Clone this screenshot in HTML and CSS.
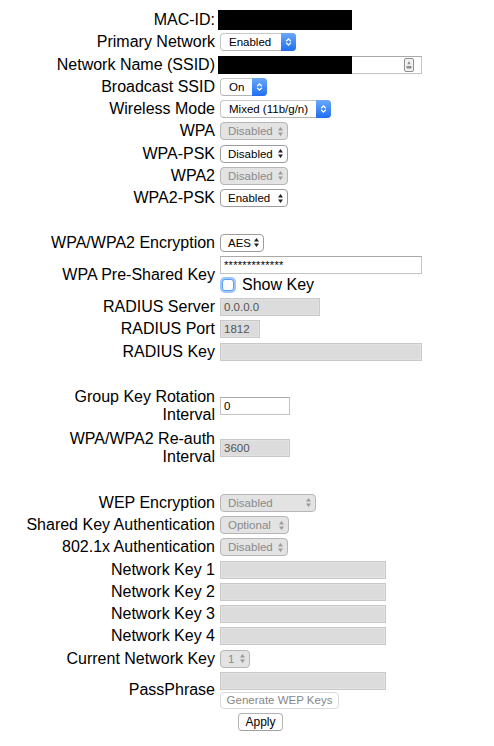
FILE: index.html
```html
<!DOCTYPE html>
<html>
<head>
<meta charset="utf-8">
<link rel="stylesheet" href="styles.css">
</head>
<body>
<form class="form">
  <div class="row"><span class="lbl">MAC-ID:</span><div class="ctl"><span class="redact mac"></span></div></div>
  <div class="row"><span class="lbl">Primary Network</span><div class="ctl"><span class="sel blue w76"><span class="txt">Enabled</span><span class="bbtn"><svg width="7" height="10" viewBox="0 0 7 10"><path d="M1.2 4.2 L3.5 1.9 L5.8 4.2 M1.2 5.8 L3.5 8.1 L5.8 5.8" fill="none" stroke="#fff" stroke-width="1.3"/></svg></span></span></div></div>
  <div class="row"><span class="lbl">Network Name (SSID)</span><div class="ctl"><span class="inp ssid"><span class="redact ssid-cover"></span><svg class="kicon" width="10" height="14" viewBox="0 0 10 14"><rect x="0.5" y="0.5" width="9" height="13" rx="1.5" fill="#f2f2f2" stroke="#8e8e8e"/><path d="M5 3 L6.6 6.2 L3.4 6.2 Z" fill="#8e8e8e"/><rect x="2.5" y="8" width="5" height="2.5" fill="#8e8e8e"/></svg></span></div></div>
  <div class="row"><span class="lbl">Broadcast SSID</span><div class="ctl"><span class="sel blue w47"><span class="txt">On</span><span class="bbtn"><svg width="7" height="10" viewBox="0 0 7 10"><path d="M1.2 4.2 L3.5 1.9 L5.8 4.2 M1.2 5.8 L3.5 8.1 L5.8 5.8" fill="none" stroke="#fff" stroke-width="1.3"/></svg></span></span></div></div>
  <div class="row"><span class="lbl">Wireless Mode</span><div class="ctl"><span class="sel blue w111"><span class="txt">Mixed (11b/g/n)</span><span class="bbtn"><svg width="7" height="10" viewBox="0 0 7 10"><path d="M1.2 4.2 L3.5 1.9 L5.8 4.2 M1.2 5.8 L3.5 8.1 L5.8 5.8" fill="none" stroke="#fff" stroke-width="1.3"/></svg></span></span></div></div>
  <div class="row"><span class="lbl">WPA</span><div class="ctl"><span class="sel small dis w68"><span class="txt">Disabled</span><svg class="arr" width="5" height="9" viewBox="0 0 5 9"><path d="M2.5 0 L5 3.5 L0 3.5 Z M2.5 9 L5 5.5 L0 5.5 Z"/></svg></span></div></div>
  <div class="row"><span class="lbl">WPA-PSK</span><div class="ctl"><span class="sel small w68"><span class="txt">Disabled</span><svg class="arr" width="5" height="9" viewBox="0 0 5 9"><path d="M2.5 0 L5 3.5 L0 3.5 Z M2.5 9 L5 5.5 L0 5.5 Z"/></svg></span></div></div>
  <div class="row"><span class="lbl">WPA2</span><div class="ctl"><span class="sel small dis w68"><span class="txt">Disabled</span><svg class="arr" width="5" height="9" viewBox="0 0 5 9"><path d="M2.5 0 L5 3.5 L0 3.5 Z M2.5 9 L5 5.5 L0 5.5 Z"/></svg></span></div></div>
  <div class="row"><span class="lbl">WPA2-PSK</span><div class="ctl"><span class="sel small w68"><span class="txt">Enabled</span><svg class="arr" width="5" height="9" viewBox="0 0 5 9"><path d="M2.5 0 L5 3.5 L0 3.5 Z M2.5 9 L5 5.5 L0 5.5 Z"/></svg></span></div></div>
  <div class="row blank"></div>
  <div class="row"><span class="lbl">WPA/WPA2 Encryption</span><div class="ctl"><span class="sel small w44"><span class="txt">AES</span><svg class="arr" width="5" height="9" viewBox="0 0 5 9"><path d="M2.5 0 L5 3.5 L0 3.5 Z M2.5 9 L5 5.5 L0 5.5 Z"/></svg></span></div></div>
  <div class="row"><span class="lbl">WPA Pre-Shared Key</span><div class="ctl"><span class="inp w202 pw">*************</span><label class="chk"><span class="box"></span><span class="chktxt">Show Key</span></label></div></div>
  <div class="row"><span class="lbl">RADIUS Server</span><div class="ctl"><span class="inp dis w100">0.0.0.0</span></div></div>
  <div class="row"><span class="lbl">RADIUS Port</span><div class="ctl"><span class="inp dis w40">1812</span></div></div>
  <div class="row"><span class="lbl">RADIUS Key</span><div class="ctl"><span class="inp dis w202"></span></div></div>
  <div class="row blank"></div>
  <div class="row tall"><span class="lbl">Group Key Rotation<br>Interval</span><div class="ctl"><span class="inp w70 dark">0</span></div></div>
  <div class="row tall"><span class="lbl">WPA/WPA2 Re-auth<br>Interval</span><div class="ctl"><span class="inp dis w70">3600</span></div></div>
  <div class="row blank"></div>
  <div class="row"><span class="lbl">WEP Encryption</span><div class="ctl"><span class="sel small dis w96"><span class="txt">Disabled</span><svg class="arr" width="5" height="9" viewBox="0 0 5 9"><path d="M2.5 0 L5 3.5 L0 3.5 Z M2.5 9 L5 5.5 L0 5.5 Z"/></svg></span></div></div>
  <div class="row"><span class="lbl">Shared Key Authentication</span><div class="ctl"><span class="sel small dis w69"><span class="txt">Optional</span><svg class="arr" width="5" height="9" viewBox="0 0 5 9"><path d="M2.5 0 L5 3.5 L0 3.5 Z M2.5 9 L5 5.5 L0 5.5 Z"/></svg></span></div></div>
  <div class="row"><span class="lbl">802.1x Authentication</span><div class="ctl"><span class="sel small dis w68"><span class="txt">Disabled</span><svg class="arr" width="5" height="9" viewBox="0 0 5 9"><path d="M2.5 0 L5 3.5 L0 3.5 Z M2.5 9 L5 5.5 L0 5.5 Z"/></svg></span></div></div>
  <div class="row"><span class="lbl">Network Key 1</span><div class="ctl"><span class="inp dis w166"></span></div></div>
  <div class="row"><span class="lbl">Network Key 2</span><div class="ctl"><span class="inp dis w166"></span></div></div>
  <div class="row"><span class="lbl">Network Key 3</span><div class="ctl"><span class="inp dis w166"></span></div></div>
  <div class="row"><span class="lbl">Network Key 4</span><div class="ctl"><span class="inp dis w166"></span></div></div>
  <div class="row"><span class="lbl">Current Network Key</span><div class="ctl"><span class="sel small dis w30"><span class="txt">1</span><svg class="arr" width="5" height="9" viewBox="0 0 5 9"><path d="M2.5 0 L5 3.5 L0 3.5 Z M2.5 9 L5 5.5 L0 5.5 Z"/></svg></span></div></div>
  <div class="row"><span class="lbl">PassPhrase</span><div class="ctl"><span class="inp dis w166"></span><span class="btn dis gen">Generate WEP Keys</span></div></div>
  <div class="row"><span class="lbl"></span><div class="ctl"><span class="btn apply">Apply</span></div></div>
</form>
</body>
</html>
```

FILE: styles.css
```css
html, body { background: #fff; }
body {
  margin: 8px;
  font-family: "Liberation Sans", Arial, Helvetica, sans-serif;
  color: #000;
}
.form {
  display: flex;
  flex-direction: column;
  gap: 2.25px;
  padding-top: 2px;
}
.row {
  display: flex;
  align-items: center;
  min-height: 20px;
  padding: 1px 0;
  box-sizing: border-box;
}
.row.blank { height: 20px; }
.row.tall { min-height: 40px; }
.lbl {
  flex: none;
  width: 207px;
  padding-right: 1px;
  text-align: right;
  font-size: 16px;
  line-height: 18px;
}
.ctl {
  margin-left: 4px;
  display: flex;
  flex-direction: column;
  align-items: flex-start;
  gap: 2px;
}
.redact { background: #000; display: block; }
.mac { width: 134px; height: 20px; margin: -1px 0 -1px -2px; }

/* selects */
.sel {
  display: flex;
  align-items: center;
  box-sizing: border-box;
  height: 18px;
  border-radius: 4px;
  font-size: 11.5px;
  background: #fff;
  position: relative;
}
.sel .txt { padding-left: 8px; flex: 1; white-space: nowrap; }
.sel.blue {
  border: 1px solid #c6c6c6;
  border-bottom-color: #b4b4b4;
}
.sel.blue .bbtn {
  width: 15px;
  align-self: stretch;
  margin: -1px -1px -1px 0;
  border-radius: 0 4px 4px 0;
  background: linear-gradient(#6aa8fa, #1f6ff1);
  display: flex;
  align-items: center;
  justify-content: center;
}
.sel.small {
  border: 1px solid #9c9c9c;
  color: #000;
}
.sel.small .arr { margin-right: 4px; fill: #222; flex: none; }
.sel.small.dis {
  background: #e3e3e3;
  border-color: #b6b6b6;
  color: #8a8a8a;
}
.sel.small.dis .arr { fill: #9a9a9a; }
.sel.small .txt { padding-left: 7px; }
.w76 { width: 76px; }
.w47 { width: 47px; }
.w111 { width: 111px; }
.w68 { width: 68px; }
.w69 { width: 69px; }
.w44 { width: 44px; }
.w96 { width: 96px; }
.w30 { width: 30px; }

/* inputs */
.inp {
  display: flex;
  align-items: center;
  box-sizing: border-box;
  height: 18px;
  border: 1px solid #c3c3c3;
  border-top-color: #a9a9a9;
  background: #fff;
  font-size: 11.5px;
  padding-left: 3px;
  color: #000;
  white-space: nowrap;
}
.inp.dis {
  background: #dcdcdc;
  border-color: #c9c9c9;
  box-shadow: inset 0 0 0 1px #e2e2e2;
  color: #555;
}
.inp.pw { font-size: 11px; letter-spacing: 0.3px; }
.w202 { width: 202px; }
.w100 { width: 100px; }
.w40 { width: 40px; }
.w70 { width: 70px; }
.w166 { width: 166px; }

.ssid {
  position: relative;
  width: 204px;
  margin-left: -2px;
  justify-content: flex-end;
  padding-right: 7px;
}
.ssid-cover {
  position: absolute;
  left: -1px;
  top: -1px;
  bottom: -1px;
  width: 134px;
}
.kicon { display: block; }

/* checkbox */
.chk {
  display: flex;
  align-items: center;
  height: 18px;
}
.chk .box {
  width: 12px;
  height: 12px;
  box-sizing: border-box;
  margin-left: 2px;
  border: 1px solid #5f9df0;
  border-radius: 3px;
  background: #fff;
  box-shadow: 0 0 0 2px #9fc6f7;
}
.chktxt {
  margin-left: 8px;
  font-size: 16px;
  line-height: 18px;
}

/* buttons */
.btn {
  display: flex;
  align-items: center;
  justify-content: center;
  box-sizing: border-box;
  height: 17px;
  border-radius: 4px;
  background: #fff;
  font-size: 11.5px;
}
.btn.gen {
  width: 119px;
  border: 1px solid #dadada;
  color: #878787;
}
.btn.apply {
  width: 45px;
  height: 18px;
  margin-left: 18px;
  border: 1px solid #b3b3b3;
  border-bottom-color: #a0a0a0;
  color: #000;
  font-size: 12px;
}
```
